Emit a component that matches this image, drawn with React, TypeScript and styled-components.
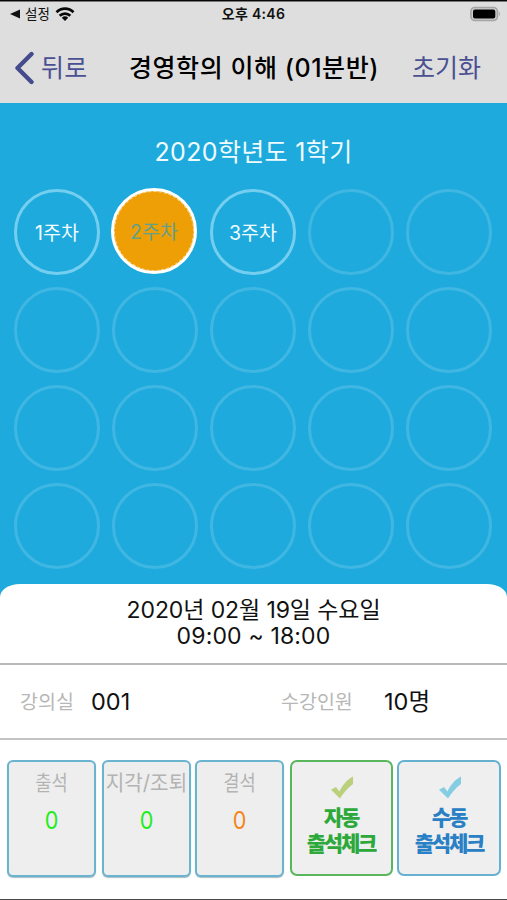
import React from "react";
import styled, { createGlobalStyle, css } from "styled-components";

const Global = createGlobalStyle`
  *, *::before, *::after { box-sizing: border-box; }
  body {
    margin: 0;
    background: #fff;
    font-family: Inter, "Noto Sans CJK KR", sans-serif;
  }
  button { font: inherit; padding: 0; margin: 0; border: 0; background: none; }
`;

const Screen = styled.div`
  width: 507px;
  height: 900px;
  display: flex;
  flex-direction: column;
  overflow: hidden;
  background: #1eaadc;
  border-top: 1px solid #080606;
  border-bottom: 1px solid #484848;
`;

const Header = styled.header`
  height: 102px;
  flex: none;
  background: #dedede;
  border-top: 1px solid #777;
`;

const StatusBar = styled.div`
  height: 22px;
  padding: 0 6px 0 10px;
  margin-top: -1px;
  display: grid;
  grid-template-columns: 1fr auto 1fr;
  align-items: center;
  color: #111;
`;

const StatusLeft = styled.div`
  display: flex;
  align-items: center;
  gap: 5px;
  svg { display: block; }
`;

const StatusRight = styled(StatusLeft)`
  justify-content: flex-end;
  padding-bottom: 1px;
`;

const Label = styled.span<{ $size: number; $weight?: number; $spacing?: number; $color?: string }>`
  display: block;
  white-space: nowrap;
  font-size: ${(p) => p.$size}px;
  font-weight: ${(p) => p.$weight ?? 400};
  letter-spacing: ${(p) => p.$spacing ?? 0}px;
  line-height: 26px;
  ${(p) => p.$color && css`color: ${p.$color};`}
`;

const ClockLabel = styled(Label)`
  margin-right: 4px;
`;

const NavBar = styled.nav`
  height: 80px;
  padding: 10px 26px 0 14px;
  display: grid;
  grid-template-columns: 115px 1fr auto;
  align-items: center;
  color: #000;
`;

const NavButton = styled.button`
  display: flex;
  align-items: center;
  gap: 7px;
  color: #4a5092;
  svg { display: block; }
`;

const Weeks = styled.main`
  height: 481px;
  flex: none;
  padding: 36px 14px 0;
`;

const Semester = styled.h1`
  margin: 0 0 23.5px;
  display: flex;
  justify-content: center;
  color: #effbff;
`;

const WeekGrid = styled.div`
  display: grid;
  grid-template-columns: repeat(5, 86px);
  grid-auto-rows: 86px;
  gap: 12px;
`;

type WeekState = "empty" | "open" | "active";

const weekLook = {
  empty: css`border: 3px solid #40b7e3;`,
  open: css`border: 3px solid #74cef0; color: #f0fbff;`,
  active: css`
    border: 3px solid #fff;
    background: #ee9f06;
    color: #62a08b;
    margin: -1px 1px 1px -1px;
    &::after {
      content: "";
      position: absolute;
      inset: 0;
      border: 1px dashed #fbdc9c;
      border-radius: 50%;
    }
  `,
};

const Week = styled.button<{ $state: WeekState }>`
  position: relative;
  border-radius: 50%;
  display: flex;
  align-items: center;
  justify-content: center;
  padding-top: 3px;
  ${(p) => weekLook[p.$state]}
`;

const Sheet = styled.section`
  flex: 1;
  background: #fff;
  border-radius: 20px 20px 0 0 / 13px 13px 0 0;
  color: #111;
  display: flex;
  flex-direction: column;
`;

const DateBlock = styled.div`
  height: 81px;
  padding-top: 13px;
  display: flex;
  flex-direction: column;
  align-items: center;
  border-bottom: 2px solid #bababa;
`;

const InfoRow = styled.div`
  height: 75px;
  padding: 0 0 0 20px;
  display: grid;
  grid-template-columns: 71px 190px 103px 1fr;
  align-items: center;
  border-bottom: 2px solid #c4c4c4;
`;

const Cards = styled.div`
  padding: 20px 6px 0 7px;
  display: grid;
  grid-template-columns: 90px 89px 90px 103px 104px;
  column-gap: 4.5px;
  align-items: start;
`;

const StatCard = styled.div`
  width: 89px;
  height: 117px;
  border: 2px solid #6bb4d0;
  border-radius: 6px;
  background: #eee;
  box-shadow: 0 1px 1px #a9bcc4;
  display: flex;
  flex-direction: column;
  align-items: center;
  padding-top: 8px;
  gap: 12px;
`;

const Narrow = styled.div<{ $scale: number }>`
  width: 85px;
  display: flex;
  justify-content: center;
  transform: scaleX(${(p) => p.$scale});
`;

const CheckButton = styled.button<{ $tone: string; $edge: string }>`
  height: 116px;
  border: 2px solid ${(p) => p.$edge};
  border-radius: 7px;
  background: #efefef;
  color: ${(p) => p.$tone};
  display: flex;
  flex-direction: column;
  align-items: center;
  padding-top: 14px;
  svg { display: block; margin: 0 0 6px 1px; }
`;

const Check = ({ color }: { color: string }) => (
  <svg width="24" height="23" viewBox="0 0 24 23">
    <path d="M1 13.8 L6 11 L9.5 15.5 C12.5 9 17 3.5 23 .5 V8 C17.5 12 13 17.5 10 22.5 Z" fill={color} />
  </svg>
);

const weeks: { name: string; state: WeekState }[] = Array.from({ length: 20 }, (_, i) => ({
  name: i < 3 ? `${i + 1}주차` : "",
  state: i === 1 ? "active" : i < 3 ? "open" : "empty",
}));

const stats = [
  { name: "출석", value: 0, color: "#20ed20", scale: 0.84 },
  { name: "지각/조퇴", value: 0, color: "#20ed20", scale: 0.96 },
  { name: "결석", value: 0, color: "#f58519", scale: 0.84 },
];

const actions = [
  { name: "자동", tone: "#2ca93a", edge: "#58b75c", check: "#bad07c" },
  { name: "수동", tone: "#2a80c4", edge: "#67b1d0", check: "#85cde3" },
];

export default function App() {
  return (
    <>
      <Global />
      <Screen>
        <Header>
          <StatusBar>
            <StatusLeft>
              <svg width="10" height="10" viewBox="0 0 10 10">
                <path d="M0 5 L10 .5 V9.5 Z" fill="#111" />
              </svg>
              <Label $size={13.5}>설정</Label>
              <svg width="20" height="14" viewBox="0 0 20 14">
                <g fill="none" stroke="#080808" strokeWidth="2.7">
                  <path d="M1.5 5.3 C6.3 .4 13.7 .4 18.5 5.3" />
                  <path d="M4.7 8.8 C7.7 5.8 12.3 5.8 15.3 8.8" />
                </g>
                <path d="M6.8 10.7 Q10 8 13.2 10.7 L10 14 Z" fill="#080808" />
              </svg>
            </StatusLeft>
            <ClockLabel $size={14} $weight={600} $spacing={0.3}>오후 4:46</ClockLabel>
            <StatusRight>
              <svg width="32" height="16" viewBox="0 0 32 16">
                <rect x="1.9" y="1.5" width="26.5" height="13" rx="4" fill="#ccc" stroke="#a5a5a5" strokeWidth="1.6" />
                <rect x="4" y="3.6" width="22.3" height="8.9" rx="2" fill="#000" />
                <path d="M29.8 5.3 Q32 8 29.8 10.7 Z" fill="#a5a5a5" />
              </svg>
            </StatusRight>
          </StatusBar>
          <NavBar>
            <NavButton>
              <svg width="20" height="34" viewBox="0 0 20 34">
                <path d="M17.5 3 L3.5 17 L17.5 31" fill="none" stroke="#454c8e" strokeWidth="4.4" strokeLinecap="round" strokeLinejoin="round" />
              </svg>
              <Label $size={25} $spacing={0.3}>뒤로</Label>
            </NavButton>
            <Label $size={25} $weight={500} $spacing={0.55}>경영학의 이해 (01분반)</Label>
            <NavButton>
              <Label $size={25}>초기화</Label>
            </NavButton>
          </NavBar>
        </Header>

        <Weeks>
          <Semester>
            <Label $size={25} $spacing={0.35}>2020학년도 1학기</Label>
          </Semester>
          <WeekGrid>
            {weeks.map((week, i) => (
              <Week key={i} $state={week.state}>
                {week.name && <Label $size={19.5}>{week.name}</Label>}
              </Week>
            ))}
          </WeekGrid>
        </Weeks>

        <Sheet>
          <DateBlock>
            <Label $size={23} $spacing={-0.1}>2020년 02월 19일 수요일</Label>
            <Label $size={23} $spacing={0.15}>09:00 ~ 18:00</Label>
          </DateBlock>
          <InfoRow>
            <Label $size={19.5} $color="#b7b7b7">강의실</Label>
            <Label $size={23.5}>001</Label>
            <Label $size={19.5} $color="#b7b7b7">수강인원</Label>
            <Label $size={23.5}>10명</Label>
          </InfoRow>
          <Cards>
            {stats.map((stat) => (
              <StatCard key={stat.name}>
                <Narrow $scale={stat.scale}>
                  <Label $size={21} $color="#b3b3b3">{stat.name}</Label>
                </Narrow>
                <Narrow $scale={0.9}>
                  <Label $size={24} $color={stat.color}>{stat.value}</Label>
                </Narrow>
              </StatCard>
            ))}
            {actions.map((action) => (
              <CheckButton key={action.name} $tone={action.tone} $edge={action.edge}>
                <Check color={action.check} />
                <Label $size={21} $weight={900} $spacing={-2}>{action.name}</Label>
                <Label $size={21} $weight={900} $spacing={-2.2}>출석체크</Label>
              </CheckButton>
            ))}
          </Cards>
        </Sheet>
      </Screen>
    </>
  );
}
